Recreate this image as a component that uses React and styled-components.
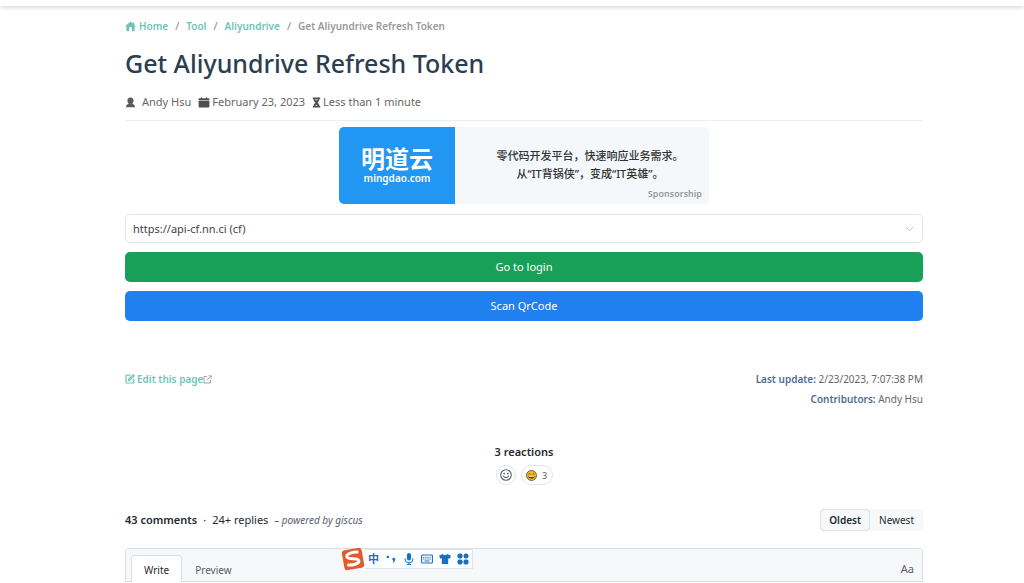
import React, { useState } from "react";
import styled, { createGlobalStyle } from "styled-components";

const GlobalStyle = createGlobalStyle`
  * {
    box-sizing: border-box;
  }
  body {
    margin: 0;
    background: #fff;
    color: #2c3e50;
    font-family: "Noto Sans", "Noto Sans CJK SC", sans-serif;
    font-size: 11px;
    line-height: 20px;
    overflow-x: hidden;
  }
  button, select {
    font-family: inherit;
    font-size: 11px;
    cursor: pointer;
  }
  a {
    color: #6fc3b9;
    text-decoration: none;
  }
  svg {
    display: block;
    flex: none;
  }
`;

function HomeIcon() {
  return (
    <svg width="11" height="11" viewBox="0 0 11 11" fill="#6fc3b9">
      <path d="M5.500.7a1 1 0 0 0-.7.2L.7 4.700c-.4.4-.2.900.3.900h.4v3.900c0 .5.300.8.8.8h1.900V7.400a1.400 1.400 0 0 1 2.800 0v2.900h1.900c.5 0 .8-.3.8-.8V5.600h.4c.5 0 .7-.5.3-.9L9.200 3.700V1.500H7.800v.9L6.200.9a1 1 0 0 0-.7-.2z" />
    </svg>
  );
}

function AuthorIcon() {
  return (
    <svg width="11" height="11" viewBox="0 0 11 11" fill="#5b5b5b">
      <path d="M5.500 .5C3.400 .5 2.300 2 2.400 3.800c.1 1.400.7 2.400 1.500 3C2.300 7.200 1 8 1 10.300h9C10 8 8.700 7.200 7.100 6.800c.8-.6 1.400-1.600 1.500-3C8.700 2 7.600.5 5.500.5z" />
    </svg>
  );
}

function CalendarIcon() {
  return (
    <svg width="12" height="11" viewBox="0 0 12 11" fill="#4f4f4f">
      <path d="M1.500 1.300h1.300V.5h1.400v.8h3.600V.5h1.400v.8h1.300c.5 0 .9.400.9.900v1H.6v-1c0-.5.400-.9.900-.9z" />
      <path d="M.6 3.700h10.800v5.800c0 .5-.4.900-.9.900h-9c-.5 0-.9-.4-.9-.9z" />
    </svg>
  );
}

function TimerIcon() {
  return (
    <svg width="9" height="11" viewBox="0 0 9 11" fill="#4f4f4f">
      <path d="M.8.600h7.400v1.300h-.8c0 1.900-.8 2.800-1.900 3.600 1.100.8 1.900 1.700 1.900 3.600h.8v1.300H.8V9.100h.8c0-1.900.8-2.800 1.900-3.600C2.400 4.700 1.600 3.800 1.600 1.900H.8z" />
      <path d="M3 2.300h3l-.5 1h-2zM4.500 7.400 3.300 9h2.400z" fill="#ddd" />
    </svg>
  );
}

function EditIcon() {
  return (
    <svg width="10" height="10" viewBox="0 0 10 10" fill="none" stroke="#6fc3b9" strokeWidth="1.200">
      <path d="M5.500 1.200H1.600q-.6 0-.6.6v6.600q0 .6.6.6h6.600q.6 0 .6-.6V4.800" />
      <path d="M3.500 6.500V5.200L8.200.7l1.100 1.100L4.700 6.500z" />
    </svg>
  );
}

function ExternalIcon() {
  return (
    <svg width="9" height="9" viewBox="0 0 9 9" fill="none" stroke="#a5a5a5">
      <path d="M4 1.500H1v6.500h6.500V5.200M5.500.800h2.700v2.700M8 1 4 5" />
    </svg>
  );
}

function SmileIcon() {
  return (
    <svg width="12" height="12" viewBox="0 0 12 12" fill="none" stroke="#57606a" strokeWidth="1.100">
      <circle cx="6" cy="6" r="5.300" />
      <path d="M3.500 7.200c1.200 1.800 3.800 1.800 5 0" strokeLinecap="round" />
      <circle cx="4.200" cy="4.600" r=".4" fill="#57606a" />
      <circle cx="7.800" cy="4.600" r=".4" fill="#57606a" />
    </svg>
  );
}

function LaughIcon() {
  return (
    <svg width="11" height="11" viewBox="0 0 11 11">
      <circle cx="5.500" cy="5.500" r="5" fill="#f3b52d" stroke="#5b4a26" strokeWidth=".8" />
      <path d="M2.600 4.300q.8-1.100 1.700 0M6.700 4.300q.8-1.100 1.700 0" fill="none" stroke="#4a3715" strokeWidth=".9" />
      <path d="M2.300 5.900h6.400c-.2 3.600-6.200 3.600-6.400 0z" fill="#5b3b15" />
      <path d="M3 6.200h5v.8H3z" fill="#fff1c4" />
    </svg>
  );
}

function ChevronIcon() {
  return (
    <svg width="9" height="6" viewBox="0 0 9 6" fill="none" stroke="#c2c2c2">
      <path d="m.8 1 3.700 3.700L8.200 1" />
    </svg>
  );
}

// input method bar icons
function SogouIcon() {
  return (
    <svg width="24" height="24" viewBox="0 0 24 24">
      <g transform="rotate(-10 12 12)">
        <rect x="2" y="2" width="20" height="20" rx="3" fill="#e2592a" />
        <path
          d="M18.500 6.200C14 4.900 6 5.300 6.300 8.900c.3 3.500 11 1.900 11.200 5.600.2 3.600-8 3.800-12.200 2.300"
          fill="none"
          stroke="#fff"
          strokeWidth="3"
        />
      </g>
    </svg>
  );
}

function PunctuationIcon() {
  return (
    <svg width="12" height="12" viewBox="0 0 12 12" fill="#1a6fc0">
      <circle cx="2.800" cy="4" r="1.300" />
      <path d="M7.300 6.200a1.500 1.500 0 1 1 2.800.8c-.2 1.400-1 2.500-2 3l-.4-.7c.6-.4.9-.9 1-1.600-.8 0-1.400-.7-1.400-1.500z" />
    </svg>
  );
}

function MicIcon() {
  return (
    <svg width="12" height="12" viewBox="0 0 12 12" fill="#1a6fc0">
      <rect x="3.900" y="0" width="4.200" height="7.600" rx="2.100" />
      <path d="M2 5.200v.6a4 4 0 0 0 8 0v-.6M6 9.800V12M3.800 11.500h4.400" fill="none" stroke="#1a6fc0" />
    </svg>
  );
}

function KeyboardIcon() {
  return (
    <svg width="12" height="12" viewBox="0 0 12 12" fill="none" stroke="#1a6fc0">
      <rect x=".6" y="2" width="10.800" height="8" rx=".8" strokeWidth="1.100" />
      <path d="M2.200 4.300h7.600M2.200 6.100h7.600" strokeDasharray="1.200 .9" />
      <path d="M3.500 8h5" />
    </svg>
  );
}

function ShirtIcon() {
  return (
    <svg width="12" height="12" viewBox="0 0 12 12" fill="#1a6fc0">
      <path d="M3.700 1c.7 1.500 3.900 1.500 4.600 0L12 2.800l-1.300 3-1.500-.5V11H2.800V5.300l-1.500.5L0 2.800z" />
    </svg>
  );
}

function GridIcon() {
  return (
    <svg width="12" height="12" viewBox="0 0 12 12" fill="#1a6fc0">
      <rect x=".5" y=".5" width="5" height="5" rx="1.700" />
      <rect x="6.500" y=".5" width="5" height="5" rx="2.500" />
      <rect x=".5" y="6.500" width="5" height="5" rx="1.700" />
      <rect x="6.500" y="6.500" width="5" height="5" rx="1.700" />
    </svg>
  );
}

function App() {
  const [api, setApi] = useState("cf");
  const [order, setOrder] = useState("oldest");
  const [tab, setTab] = useState("write");

  return (
    <>
      <GlobalStyle />
      <Navbar />
      <Page>
        <Breadcrumb aria-label="Breadcrumb">
          <CrumbLink href="#home">
            <HomeIcon />
            Home
          </CrumbLink>
          <Slash>/</Slash>
          <CrumbLink href="#tool">Tool</CrumbLink>
          <Slash>/</Slash>
          <CrumbLink href="#aliyundrive">Aliyundrive</CrumbLink>
          <Slash>/</Slash>
          <CrumbCurrent>Get Aliyundrive Refresh Token</CrumbCurrent>
        </Breadcrumb>

        <Title>Get Aliyundrive Refresh Token</Title>

        <PageInfo>
          <InfoItem $gap="6px">
            <AuthorIcon />
            Andy Hsu
          </InfoItem>
          <InfoItem>
            <CalendarIcon />
            February 23, 2023
          </InfoItem>
          <InfoItem>
            <TimerIcon />
            Less than 1 minute
          </InfoItem>
        </PageInfo>

        <Sponsor href="#mingdao">
          <SponsorLogo>
            <LogoName>明道云</LogoName>
            <LogoSite>mingdao.com</LogoSite>
          </SponsorLogo>
          <SponsorBody>
            <SponsorText>
              零代码开发平台，快速响应业务需求。
              <br />
              从“IT背锅侠”，变成“IT英雄”。
            </SponsorText>
            <SponsorTag>Sponsorship</SponsorTag>
          </SponsorBody>
        </Sponsor>

        <Actions>
          <SelectBox>
            <Select aria-label="API" value={api} onChange={(e) => setApi(e.target.value)}>
              <option value="cf">https://api-cf.nn.ci (cf)</option>
            </Select>
            <SelectArrow>
              <ChevronIcon />
            </SelectArrow>
          </SelectBox>
          <ActionButton $color="#18a058">Go to login</ActionButton>
          <ActionButton $color="#2080f0">Scan QrCode</ActionButton>
        </Actions>

        <PageMeta>
          <EditLink href="#edit">
            <EditIcon />
            <EditText>Edit this page</EditText>
            <ExternalIcon />
          </EditLink>
          <MetaList>
            <div>
              <MetaLabel>Last update:</MetaLabel> 2/23/2023, 7:07:38 PM
            </div>
            <div>
              <MetaLabel>Contributors:</MetaLabel> Andy Hsu
            </div>
          </MetaList>
        </PageMeta>

        <Reactions>
          <ReactionTitle>3 reactions</ReactionTitle>
          <ReactionRow>
            <ReactionButton aria-label="Add reactions">
              <SmileIcon />
            </ReactionButton>
            <ReactionButton $wide>
              <LaughIcon />
              3
            </ReactionButton>
          </ReactionRow>
        </Reactions>

        <CommentsHeader>
          <CommentCount>
            <strong>43 comments</strong>
            <span>·</span>
            <span>24+ replies</span>
            <Powered>
              – <PoweredLink href="#giscus">powered by giscus</PoweredLink>
            </Powered>
          </CommentCount>
          <OrderGroup>
            <OrderButton $active={order === "oldest"} onClick={() => setOrder("oldest")}>
              Oldest
            </OrderButton>
            <OrderButton $active={order === "newest"} onClick={() => setOrder("newest")}>
              Newest
            </OrderButton>
          </OrderGroup>
        </CommentsHeader>

        <CommentBox>
          <TabBar>
            <Tab $active={tab === "write"} onClick={() => setTab("write")}>
              Write
            </Tab>
            <Tab $active={tab === "preview"} onClick={() => setTab("preview")}>
              Preview
            </Tab>
            <FontToggle>Aa</FontToggle>
          </TabBar>
        </CommentBox>
      </Page>

      <InputBar>
        <SogouIcon />
        <InputTools>
          <InputLang>中</InputLang>
          <PunctuationIcon />
          <MicIcon />
          <KeyboardIcon />
          <ShirtIcon />
          <GridIcon />
        </InputTools>
      </InputBar>
    </>
  );
}
export default App;

const Navbar = styled.header`
  height: 6px;
  background: #fff;
  box-shadow: 0 1px 5px rgba(0, 0, 0, 0.2);
`;

const Page = styled.main`
  padding: 10px 101px 0 125px;
`;

const Breadcrumb = styled.nav`
  display: flex;
  align-items: center;
  gap: 7px;
  font-size: 10px;
  font-weight: 600;
`;

const CrumbLink = styled.a`
  display: flex;
  align-items: center;
  gap: 3px;
`;

const Slash = styled.span`
  color: #8a8a8a;
  font-size: 11px;
  font-weight: 400;
`;

const CrumbCurrent = styled.span`
  color: #999;
`;

const Title = styled.h1`
  margin: 9px 0 10px;
  font-size: 25px;
  font-weight: 500;
  line-height: 36px;
`;

const PageInfo = styled.div`
  display: flex;
  align-items: center;
  gap: 7px;
  height: 30px;
  margin-top: 10px;
  padding-bottom: 7px;
  border-bottom: 1px solid #eee;
  color: #666;
`;

const InfoItem = styled.span`
  display: flex;
  align-items: center;
  gap: ${(props) => props.$gap || "2px"};
`;

const Sponsor = styled.a`
  display: flex;
  width: 370px;
  max-width: 100%;
  height: 77px;
  margin: 6px auto 10px;
  border-radius: 5px;
  background: #f4f8fa;
  overflow: hidden;
`;

const SponsorLogo = styled.div`
  display: flex;
  flex: 0 0 116px;
  flex-direction: column;
  align-items: center;
  padding-top: 19px;
  background: #2196f3;
  color: #fff;
`;

const LogoName = styled.span`
  font-size: 24px;
  font-weight: 700;
  line-height: 26px;
`;

const LogoSite = styled.span`
  font-size: 10px;
  font-weight: 600;
  line-height: 12px;
`;

const SponsorBody = styled.div`
  display: flex;
  flex: 1;
  flex-direction: column;
  padding: 20px 7px 0 23px;
`;

const SponsorText = styled.div`
  color: #333;
  font-weight: 500;
  line-height: 18px;
  text-align: center;
`;

const SponsorTag = styled.span`
  color: #999;
  font-size: 9px;
  font-weight: 600;
  line-height: 22px;
  text-align: right;
`;

const Actions = styled.div`
  display: flex;
  flex-direction: column;
  gap: 9px;
`;

const SelectBox = styled.div`
  position: relative;
`;

const Select = styled.select`
  display: block;
  appearance: none;
  width: 100%;
  height: 29px;
  padding: 0 28px 0 7px;
  border: 1px solid #e2e5e8;
  border-radius: 5px;
  background: #fff;
  color: #444;
`;

const SelectArrow = styled.span`
  position: absolute;
  top: 12px;
  right: 9px;
  pointer-events: none;
`;

const ActionButton = styled.button`
  height: 30px;
  padding: 0 8px 1px;
  border: none;
  border-radius: 5px;
  background: ${(props) => props.$color};
  color: #fff;
`;

const PageMeta = styled.footer`
  display: flex;
  justify-content: space-between;
  align-items: flex-start;
  margin-top: 48px;
  font-size: 10px;
`;

const EditLink = styled.a`
  display: flex;
  align-items: center;
  font-weight: 600;
`;

const EditText = styled.span`
  margin-left: 2px;
`;

const MetaList = styled.div`
  color: #666;
  text-align: right;
`;

const MetaLabel = styled.span`
  color: #4e6e8e;
  font-weight: 600;
`;

const Reactions = styled.section`
  display: flex;
  flex-direction: column;
  align-items: center;
  gap: 3px;
  margin-top: 33px;
`;

const ReactionTitle = styled.h2`
  margin: 0;
  color: #24292f;
  font-size: 11px;
  font-weight: 600;
  line-height: 20px;
`;

const ReactionRow = styled.div`
  display: flex;
  gap: 5px;
`;

const ReactionButton = styled.button`
  display: flex;
  align-items: center;
  justify-content: center;
  gap: 5px;
  width: ${(props) => (props.$wide ? "32px" : "20px")};
  height: 20px;
  padding: 0;
  border: 1px solid #e1e4e8;
  border-radius: 10px;
  background: #fff;
  color: #57606a;
  font-size: 9px;
`;

const CommentsHeader = styled.div`
  display: flex;
  align-items: center;
  justify-content: space-between;
  margin: 24px 0 17px;
`;

const CommentCount = styled.div`
  display: flex;
  align-items: center;
  gap: 6px;
  color: #24292f;

  strong {
    font-weight: 600;
  }
`;

const Powered = styled.em`
  color: #57606a;
  font-size: 10px;
`;

const PoweredLink = styled.a`
  color: inherit;
`;

const OrderGroup = styled.div`
  display: flex;
  border-radius: 4px;
  background: #f6f8fa;
`;

const OrderButton = styled.button`
  height: 22px;
  padding: 0 8px;
  border: 1px solid ${(props) => (props.$active ? "#dcdfe3" : "transparent")};
  border-radius: 4px;
  background: transparent;
  color: #24292f;
  font-size: 10px;
  font-weight: ${(props) => (props.$active ? 600 : 400)};
`;

const CommentBox = styled.section`
  border: 1px solid #d8dee4;
  border-bottom: none;
  border-radius: 4px 4px 0 0;
`;

const TabBar = styled.div`
  display: flex;
  align-items: flex-end;
  padding: 6px 8px 0 5px;
  border-bottom: 1px solid #d8dee4;
  background: #f6f8fa;
`;

const Tab = styled.button`
  height: 27px;
  margin-bottom: -1px;
  padding: 2px 12px 0;
  border: 1px solid ${(props) => (props.$active ? "#d8dee4" : "transparent")};
  border-bottom: none;
  border-radius: 4px 4px 0 0;
  background: ${(props) => (props.$active ? "#fff" : "transparent")};
  color: ${(props) => (props.$active ? "#24292f" : "#57606a")};
  font-size: 10px;
`;

const FontToggle = styled.button`
  height: 26px;
  margin-left: auto;
  padding: 0;
  border: none;
  background: transparent;
  color: #57606a;
`;

const InputBar = styled.div`
  position: fixed;
  left: 341px;
  bottom: 12px;
  display: flex;
  align-items: center;
`;

const InputTools = styled.div`
  display: flex;
  align-items: center;
  gap: 6px;
  height: 20px;
  padding: 0 3px;
  border: 1px solid #dbe6f3;
  border-left: none;
  background: #fff;
`;

const InputLang = styled.span`
  color: #1a6fc0;
  font-weight: 700;
`;
